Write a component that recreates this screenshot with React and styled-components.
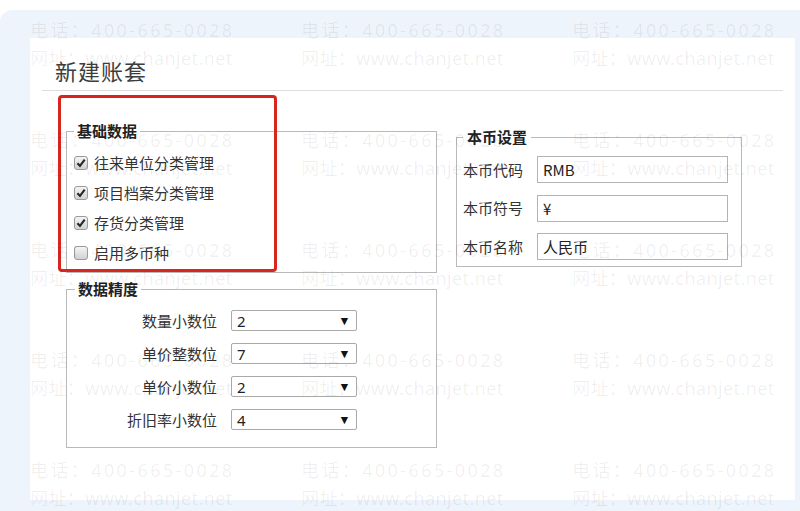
import React from 'react';
import styled, { createGlobalStyle } from 'styled-components';

const GlobalStyle = createGlobalStyle`
    html, body {
        margin: 0;
        padding: 0;
        background: #fff;
        overflow: hidden;
    }
    body {
        font-family: "Noto Sans CJK SC", "Noto Sans", sans-serif;
        color: #333;
    }
    * {
        box-sizing: border-box;
    }
`;

const Page = styled.div`
    position: relative;
    width: 800px;
    height: 511px;
    padding-top: 10px;
    overflow: hidden;
`;

const Panel = styled.div`
    height: 501px;
    background: #eef4fb;
    border-radius: 12px 0 0 0;
    padding: 28px 5px 11px 30px;
`;

const Dialog = styled.div`
    height: 462px;
    background: #fff;
    display: flex;
    flex-direction: column;
`;

const Header = styled.div`
    height: 53px;
    margin: 0 12px;
    padding: 12px 0 0 13px;
    border-bottom: 1px solid #dedede;
    display: flex;
    align-items: center;
`;

const Title = styled.h1`
    margin: 0;
    font-size: 22px;
    font-weight: normal;
    letter-spacing: 1px;
    color: #3d3d3d;
    line-height: 28px;
`;

const Body = styled.div`
    position: relative;
    display: flex;
    align-items: flex-start;
    gap: 19px;
    padding: 30px 0 0 36px;
`;

const Column = styled.div`
    display: flex;
    flex-direction: column;
    gap: 6px;
    width: ${p => p.$width}px;
    margin-top: ${p => p.$offset || 0}px;
`;

const Group = styled.fieldset`
    margin: 0;
    min-width: 0;
    border: 1px solid #b9b9b9;
    padding: ${p => p.$pad};
`;

const Legend = styled.legend`
    padding: 0 ${p => p.$gap || 3}px;
    font-size: 15px;
    font-weight: bold;
    line-height: 20px;
    color: #222;
`;

const CheckRow = styled.label`
    display: flex;
    align-items: center;
    gap: 6px;
    height: 30px;
    font-size: 15px;
    line-height: 20px;
    color: #333;
`;

const Box = styled.span`
    width: 14px;
    height: 14px;
    flex: none;
    border: 1px solid #9a9a9a;
    border-radius: 3px;
    background: linear-gradient(#f4f4f4, #d2d2d2);
    display: flex;
    align-items: center;
    justify-content: center;
`;

const FormGrid = styled.div`
    display: grid;
    grid-template-columns: ${p => p.$cols};
    column-gap: 14px;
    row-gap: ${p => p.$rowGap}px;
    align-items: center;
`;

const FieldLabel = styled.span`
    font-size: 15px;
    line-height: 20px;
    color: #333;
    text-align: ${p => p.$align || 'left'};
    white-space: nowrap;
`;

const TextBox = styled.div`
    height: 27px;
    border: 1px solid #b4b4b4;
    padding: 0 5px;
    font-family: "Noto Sans CJK SC", "Noto Sans", sans-serif;
    font-size: 15px;
    line-height: 25px;
    color: #222;
`;

const Select = styled.div`
    width: 126px;
    height: 21px;
    margin: 6px 0;
    border: 1px solid #a9a9a9;
    border-radius: 2px;
    padding: 0 8px 0 5px;
    display: flex;
    align-items: center;
    justify-content: space-between;
    font-family: "Noto Sans", sans-serif;
    font-size: 15px;
    color: #222;
`;

const Arrow = styled.span`
    font-family: "DejaVu Sans", sans-serif;
    font-size: 9.5px;
    line-height: 1;
    color: #111;
`;

const Highlight = styled.div`
    position: absolute;
    left: 28px;
    top: 4px;
    width: 219px;
    height: 177px;
    border: 3px solid #d8261f;
    border-radius: 4px;
    pointer-events: none;
`;

const Watermark = styled.div`
    position: absolute;
    inset: 0;
    padding: 16px 0 0 30px;
    display: grid;
    grid-template-columns: repeat(3, 271px);
    grid-auto-rows: 110px;
    pointer-events: none;
    overflow: hidden;
`;

const Mark = styled.div`
    font-family: "Noto Sans", "Noto Sans CJK SC", sans-serif;
    font-size: 18px;
    line-height: 28px;
    color: rgba(0, 0, 0, 0.065);
    white-space: nowrap;
`;

const MarkLine = styled.div`
    letter-spacing: ${p => p.$spacing}px;
`;

const Check = () => (
    <svg width="10" height="10" viewBox="0 0 10 10">
        <path d="M1.4 5.2 L4 7.9 L8.7 1.7" fill="none" stroke="#262626" strokeWidth="2.1" />
    </svg>
);

const basics = [
    { label: '往来单位分类管理', checked: true },
    { label: '项目档案分类管理', checked: true },
    { label: '存货分类管理', checked: true },
    { label: '启用多币种', checked: false },
];

const currency = [
    { label: '本币代码', value: 'RMB' },
    { label: '本币符号', value: '¥' },
    { label: '本币名称', value: '人民币' },
];

const precision = [
    { label: '数量小数位', value: '2' },
    { label: '单价整数位', value: '7' },
    { label: '单价小数位', value: '2' },
    { label: '折旧率小数位', value: '4' },
];

export default function App() {
    const marks = Array.from({ length: 15 });

    return (
        <>
            <GlobalStyle />
            <Page>
                <Panel>
                    <Dialog>
                        <Header>
                            <Title>新建账套</Title>
                        </Header>
                        <Body>
                            <Column $width={371}>
                                <Group $pad="7px 6px 4px 7px">
                                    <Legend>基础数据</Legend>
                                    {basics.map(item => (
                                        <CheckRow key={item.label}>
                                            <Box>{item.checked && <Check />}</Box>
                                            {item.label}
                                        </CheckRow>
                                    ))}
                                </Group>
                                <Group $pad="5px 6px 11px 8px">
                                    <Legend>数据精度</Legend>
                                    <FormGrid $cols="142px 126px" $rowGap={0}>
                                        {precision.map(item => (
                                            <React.Fragment key={item.label}>
                                                <FieldLabel $align="right">{item.label}</FieldLabel>
                                                <Select>
                                                    <span>{item.value}</span>
                                                    <Arrow>▼</Arrow>
                                                </Select>
                                            </React.Fragment>
                                        ))}
                                    </FormGrid>
                                </Group>
                            </Column>
                            <Column $width={286} $offset={6}>
                                <Group $pad="9px 13px 6px 6px">
                                    <Legend $gap={4}>本币设置</Legend>
                                    <FormGrid $cols="60px 1fr" $rowGap={11.5}>
                                        {currency.map(item => (
                                            <React.Fragment key={item.label}>
                                                <FieldLabel>{item.label}</FieldLabel>
                                                <TextBox>{item.value}</TextBox>
                                            </React.Fragment>
                                        ))}
                                    </FormGrid>
                                </Group>
                            </Column>
                            <Highlight />
                        </Body>
                    </Dialog>
                </Panel>
                <Watermark>
                    {marks.map((_, i) => (
                        <Mark key={i}>
                            <MarkLine $spacing={2.4}>电话：400-665-0028</MarkLine>
                            <MarkLine $spacing={0.4}>网址：www.chanjet.net</MarkLine>
                        </Mark>
                    ))}
                </Watermark>
            </Page>
        </>
    );
}
